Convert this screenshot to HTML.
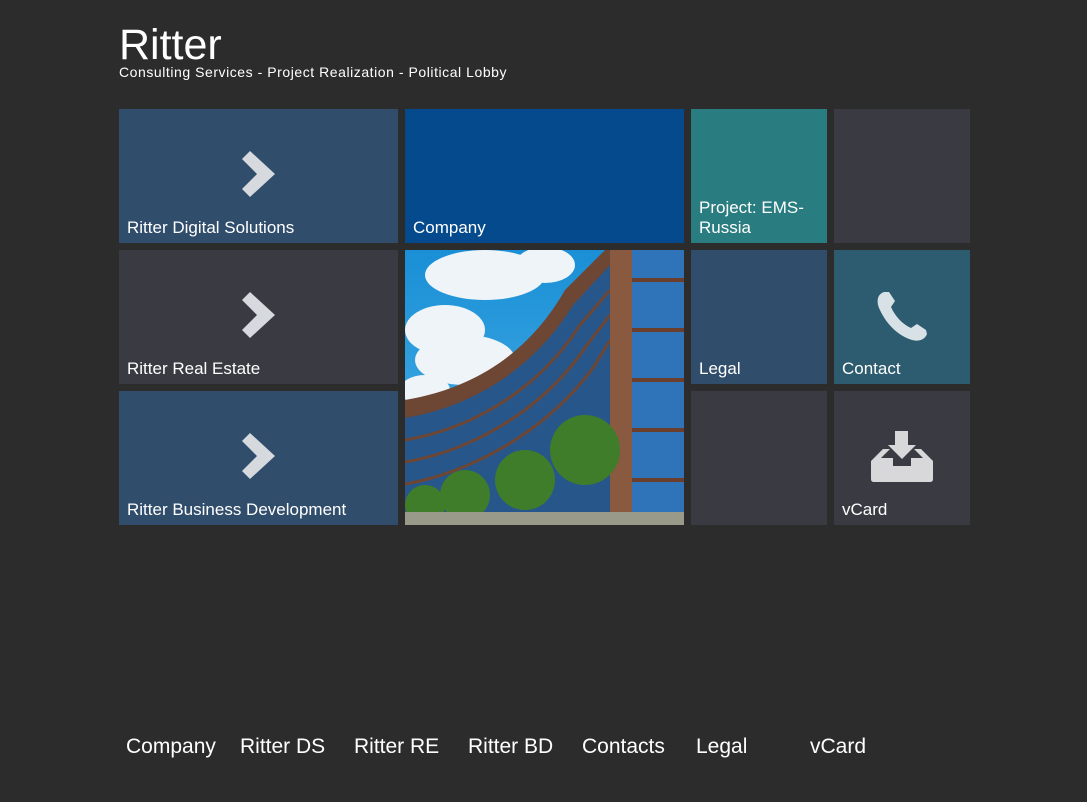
<!DOCTYPE html>
<html><head><meta charset="utf-8"><style>
body{margin:0;background:#2c2c2c;width:1087px;height:802px;overflow:hidden;font-family:"Liberation Sans",sans-serif;color:#fff;position:relative}
.t{position:absolute;box-sizing:border-box}
.l{position:absolute;left:8px;bottom:5px;font-size:17px;line-height:20px}
.ic{position:absolute;left:50%;top:42px;transform:translateX(-50%)}
.f{position:absolute;top:735px;font-size:21px}
</style></head><body>
<div style="position:absolute;left:119px;top:20px;font-size:43px;line-height:50px">Ritter</div>
<div style="position:absolute;left:119px;top:64px;font-size:14px;letter-spacing:0.55px">Consulting Services - Project Realization - Political Lobby</div>

<div class="t" style="left:119px;top:109px;width:279px;height:134px;background:#304d6b"><svg class="ic" width="34" height="46" viewBox="0 0 34 46"><path d="M0 8 8 0 33 23 8 46 0 38 15 23Z" fill="#d6d9de"/></svg><div class="l">Ritter Digital Solutions</div></div>
<div class="t" style="left:405px;top:109px;width:279px;height:134px;background:#054a8d"><div class="l">Company</div></div>
<div class="t" style="left:691px;top:109px;width:136px;height:134px;background:#297c7f"><div class="l">Project: EMS-<br>Russia</div></div>
<div class="t" style="left:834px;top:109px;width:136px;height:134px;background:#393a42"></div>

<div class="t" style="left:119px;top:250px;width:279px;height:134px;background:#393a42"><svg class="ic" width="34" height="46" viewBox="0 0 34 46"><path d="M0 8 8 0 33 23 8 46 0 38 15 23Z" fill="#d6d9de"/></svg><div class="l">Ritter Real Estate</div></div>
<div class="t" style="left:405px;top:250px;width:279px;height:275px;overflow:hidden;background:#2a9ad8">
<svg width="279" height="275" viewBox="0 0 279 275">
<defs><linearGradient id="s" x1="0" y1="0" x2="0" y2="1"><stop offset="0" stop-color="#1a8fd6"/><stop offset="1" stop-color="#4db3e8"/></linearGradient></defs>
<rect width="279" height="275" fill="url(#s)"/>
<g fill="#eef4f8"><ellipse cx="80" cy="25" rx="60" ry="25"/><ellipse cx="140" cy="15" rx="30" ry="18"/><ellipse cx="40" cy="80" rx="40" ry="25"/><ellipse cx="60" cy="110" rx="50" ry="25"/><ellipse cx="20" cy="140" rx="25" ry="15"/></g>
<path d="M0 150 C60 140 120 110 160 40 L200 0 L279 0 L279 275 L0 275Z" fill="#6e4634"/>
<path d="M0 168 C60 158 125 125 168 55 L205 15 L279 15 L279 275 L0 275Z" fill="#27568a"/>
<g stroke="#6e4634" stroke-width="3"><path d="M0 190 C60 180 130 145 175 75 L205 40" fill="none"/><path d="M0 212 C60 202 135 165 182 95 L205 65" fill="none"/><path d="M0 234 C60 224 140 185 190 115 L205 90" fill="none"/></g>
<rect x="205" y="0" width="22" height="275" fill="#8a5a40"/>
<rect x="227" y="0" width="52" height="275" fill="#2f73b8"/>
<g stroke="#6b3f2c" stroke-width="4"><line x1="227" y1="30" x2="279" y2="30"/><line x1="227" y1="80" x2="279" y2="80"/><line x1="227" y1="130" x2="279" y2="130"/><line x1="227" y1="180" x2="279" y2="180"/><line x1="227" y1="230" x2="279" y2="230"/></g>
<g fill="#3f7d2a"><circle cx="180" cy="200" r="35"/><circle cx="120" cy="230" r="30"/><circle cx="60" cy="245" r="25"/><circle cx="20" cy="255" r="20"/></g>
<rect x="0" y="262" width="279" height="13" fill="#9a9a8a"/>
</svg></div>
<div class="t" style="left:691px;top:250px;width:136px;height:134px;background:#304d6b"><div class="l">Legal</div></div>
<div class="t" style="left:834px;top:250px;width:136px;height:134px;background:#2d5c70"><svg style="position:absolute;left:42px;top:40px" width="52" height="52" viewBox="0 0 52 52"><path d="M8 2 C2 4 0 10 3 18 C10 34 22 46 36 50 C44 52 49 49 51 44 L50 40 L41 34 L35 38 C26 34 19 26 15 17 L19 11 L13 2Z" fill="#d8e2e6"/></svg><div class="l">Contact</div></div>

<div class="t" style="left:119px;top:391px;width:279px;height:134px;background:#304d6b"><svg class="ic" width="34" height="46" viewBox="0 0 34 46"><path d="M0 8 8 0 33 23 8 46 0 38 15 23Z" fill="#d6d9de"/></svg><div class="l">Ritter Business Development</div></div>
<div class="t" style="left:691px;top:391px;width:136px;height:134px;background:#393a42"></div>
<div class="t" style="left:834px;top:391px;width:136px;height:134px;background:#393a42"><svg style="position:absolute;left:37px;top:40px" width="62" height="52" viewBox="0 0 62 52"><path d="M24 0H37V14H45L31 28 17 14H24Z" fill="#d8d8da"/><path d="M12 18H19L10 27H22V35H40V27H52L43 18H50L62 30V48Q62 51 59 51H3Q0 51 0 48V30Z" fill="#d8d8da"/></svg><div class="l">vCard</div></div>

<div class="f" style="left:126px">Company</div>
<div class="f" style="left:240px">Ritter DS</div>
<div class="f" style="left:354px">Ritter RE</div>
<div class="f" style="left:468px">Ritter BD</div>
<div class="f" style="left:582px">Contacts</div>
<div class="f" style="left:696px">Legal</div>
<div class="f" style="left:810px">vCard</div>
</body></html>
